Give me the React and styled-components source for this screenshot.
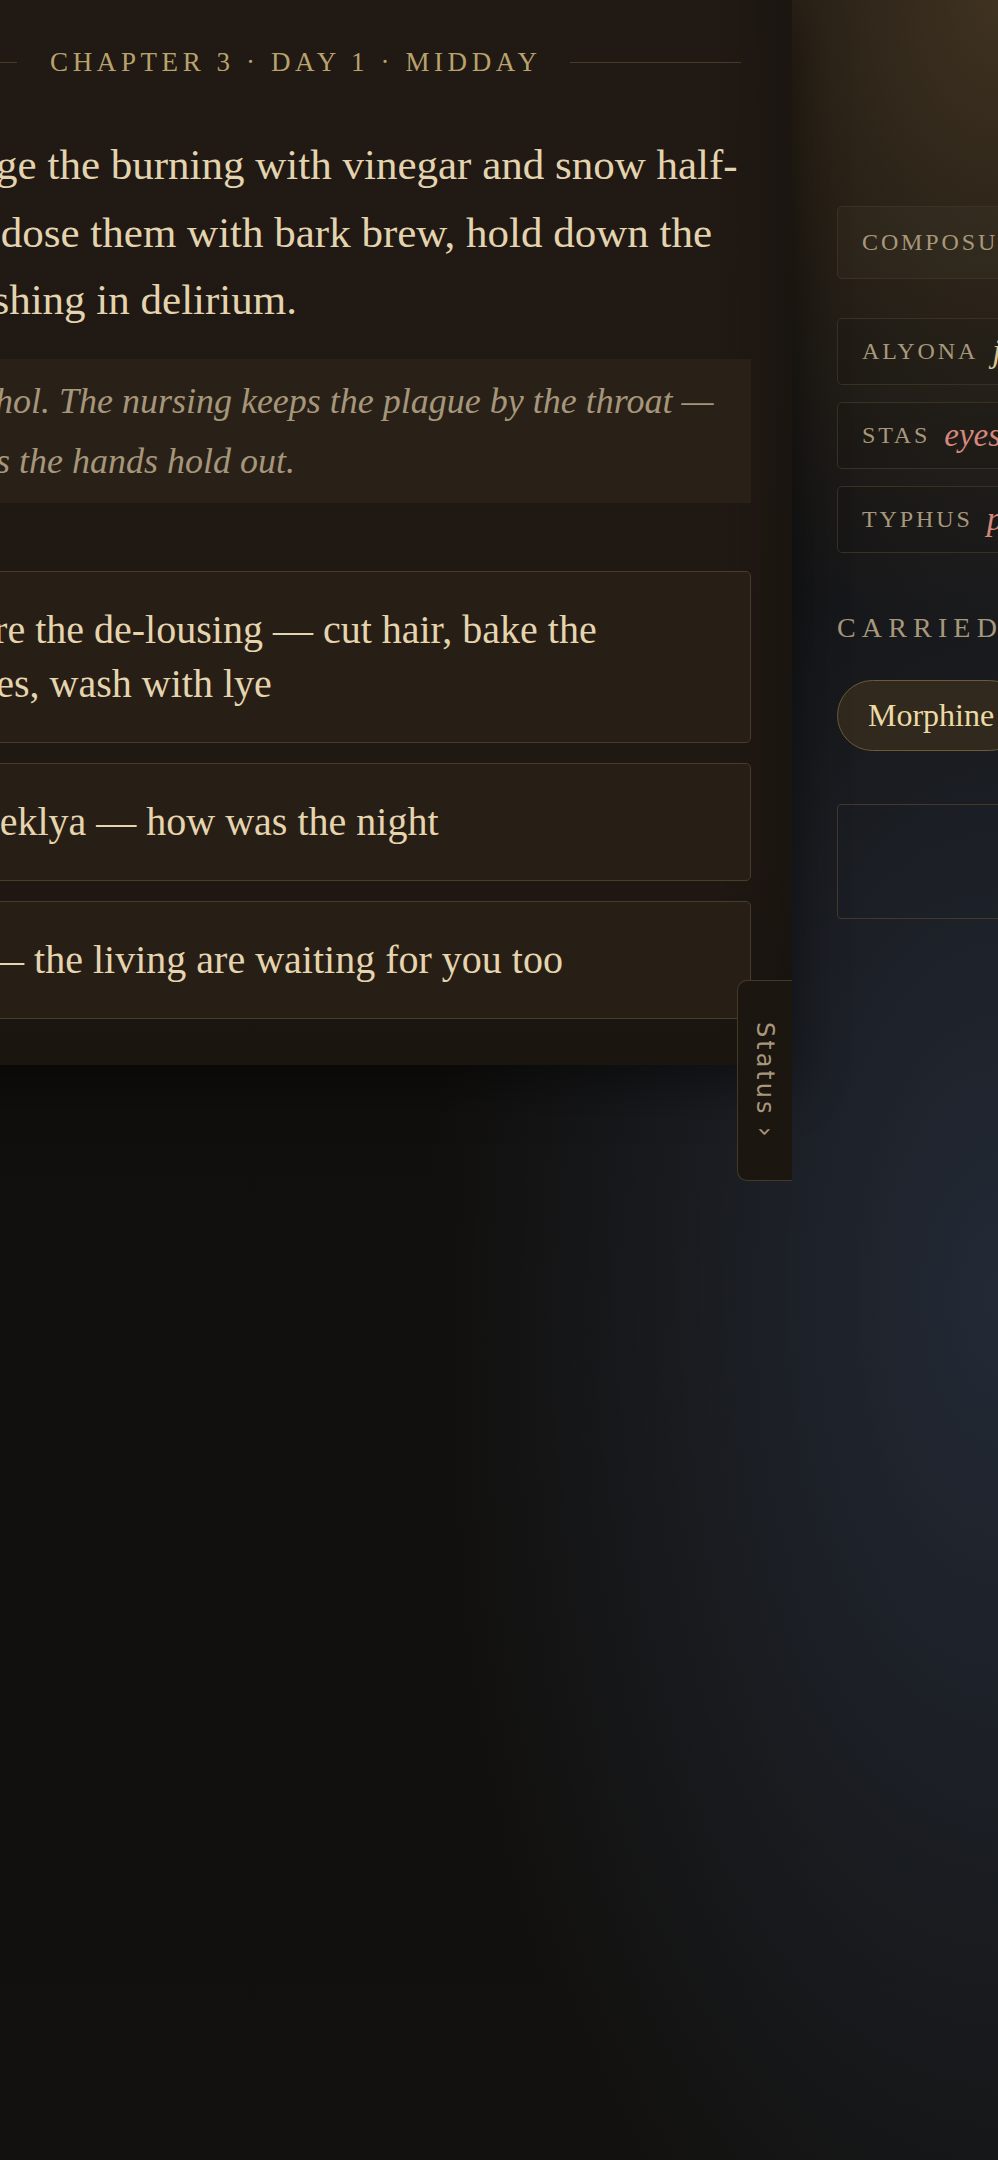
import styled, { createGlobalStyle } from "styled-components"

const GlobalStyle = createGlobalStyle`
    html, body {
        margin: 0;
        padding: 0;
    }
    body {
        min-height: 2160px;
        overflow: hidden;
        font-family: "Liberation Serif", "DejaVu Serif", serif;
        background:
            radial-gradient(ellipse 620px 900px at 100% 0%, rgba(68, 54, 35, 0.9) 0%, rgba(68, 54, 35, 0) 72%),
            radial-gradient(ellipse 760px 1500px at 100% 60%, rgba(36, 43, 56, 0.95) 0%, rgba(36, 43, 56, 0) 75%),
            linear-gradient(180deg, #0f0d0b 0%, #12110f 100%);
    }
`

const Stage = styled.div`
    display: flex;
    align-items: flex-start;
    margin-left: -205px;
    width: 1700px;
`

const Story = styled.main`
    position: relative;
    flex: 0 0 997px;
    box-sizing: border-box;
    padding: 44px 41px 46px;
    background:
        linear-gradient(90deg, rgba(0,0,0,0) 92%, rgba(0,0,0,0.14) 100%),
        linear-gradient(180deg, #201914 0%, #1f1813 80%, #1b1510 100%);
    box-shadow: 0 18px 50px rgba(0, 0, 0, 0.45);
`

const ChapterBar = styled.div`
    display: flex;
    align-items: center;
    gap: 33px;
    height: 36px;
    padding: 0 10px;
    &::before, &::after {
        content: "";
        flex: 1;
        height: 1px;
        background: #46382a;
    }
`

const ChapterTitle = styled.span`
    font-size: 27px;
    line-height: 36px;
    letter-spacing: 0.17em;
    margin-right: -0.17em;
    color: #b9a26c;
    white-space: nowrap;
`

const Prose = styled.p`
    margin: 51px 0 0;
    font-size: 43px;
    line-height: 67.5px;
    color: #e3d3ae;
    white-space: nowrap;
`

const Aside = styled.blockquote`
    margin: 25px 0 0;
    padding: 12px 28px;
    background: #292118;
    font-style: italic;
    font-size: 36px;
    line-height: 60px;
    color: #a6967a;
    white-space: nowrap;
`

const Choices = styled.div`
    display: flex;
    flex-direction: column;
    gap: 20px;
    margin-top: 68px;
`

const Choice = styled.button`
    display: block;
    width: 100%;
    box-sizing: border-box;
    padding: 31px 20px 31px 66px;
    border: 1px solid #4a3c2a;
    border-radius: 5px;
    background: #271f16;
    font-family: inherit;
    font-size: 40px;
    line-height: 54px;
    color: #e5d4ae;
    text-align: left;
    white-space: nowrap;
    cursor: pointer;
`

const StatusTab = styled.button`
    position: absolute;
    top: 980px;
    right: 0;
    width: 55px;
    height: 201px;
    box-sizing: border-box;
    padding: 0;
    display: flex;
    align-items: center;
    justify-content: center;
    border: 1.5px solid #46392a;
    border-right: 0;
    border-radius: 10px 0 0 10px;
    background: #1c1611;
    cursor: pointer;
`

const StatusText = styled.span`
    writing-mode: vertical-rl;
    font-family: "DejaVu Sans", "Liberation Sans", sans-serif;
    font-size: 24px;
    letter-spacing: 3px;
    color: #a8977a;
`

const Sidebar = styled.aside`
    flex: 0 0 520px;
    box-sizing: border-box;
    padding: 206px 40px 0 45px;
    display: flex;
    flex-direction: column;
`

const Meter = styled.div`
    height: 73px;
    box-sizing: border-box;
    display: flex;
    align-items: center;
    padding: 0 24px;
    border: 1px solid #3c3124;
    border-radius: 5px;
    background: rgba(255, 235, 200, 0.025);
`

const Caps = styled.span`
    font-size: 24px;
    letter-spacing: 0.12em;
    color: #a8987b;
    white-space: nowrap;
`

const People = styled.div`
    display: flex;
    flex-direction: column;
    gap: 17px;
    margin-top: 39px;
`

const Person = styled.div`
    height: 67px;
    box-sizing: border-box;
    display: flex;
    align-items: center;
    gap: 14px;
    padding: 0 24px;
    border: 1px solid #3a3024;
    border-radius: 5px;
    background: rgba(0, 0, 0, 0.06);
`

const Condition = styled.span`
    font-style: italic;
    font-size: 33px;
    color: ${p => p.$tone === "bad" ? "#d6877c" : "#d9c58e"};
    white-space: nowrap;
`

const SectionLabel = styled.div`
    margin-top: 60px;
    font-size: 28px;
    line-height: 30px;
    letter-spacing: 0.22em;
    color: #a8987b;
`

const Pill = styled.div`
    align-self: flex-start;
    margin-top: 37px;
    height: 71px;
    box-sizing: border-box;
    display: inline-flex;
    align-items: center;
    padding: 0 30px;
    border: 1.5px solid #6b5a33;
    border-radius: 36px;
    background: #32291e;
    font-size: 32px;
    color: #ebdaa5;
    white-space: nowrap;
`

const EmptySlot = styled.div`
    margin-top: 53px;
    height: 115px;
    box-sizing: border-box;
    border: 1.5px solid #45382a;
    border-radius: 4px;
`

export default function App(){
    const people = [
        { name: "ALYONA", state: "just holding", tone: "ok" },
        { name: "STAS", state: "eyes sunken", tone: "bad" },
        { name: "TYPHUS", state: "peaking", tone: "bad" },
    ]

    return <>
        <GlobalStyle />
        <Stage>
            <Story>
                <ChapterBar>
                    <ChapterTitle>CHAPTER 3 · DAY 1 · MIDDAY</ChapterTitle>
                </ChapterBar>
                <Prose>
                    We assuage the burning with vinegar and snow half-<br />
                    melted; I dose them with bark brew, hold down the<br />
                    ones thrashing in delirium.
                </Prose>
                <Aside>
                    Lye, alcohol. The nursing keeps the plague by the throat —<br />
                    as long as the hands hold out.
                </Aside>
                <Choices>
                    <Choice>
                        Prepare the de-lousing — cut hair, bake the<br />
                        britches, wash with lye
                    </Choice>
                    <Choice>Ask Feklya — how was the night</Choice>
                    <Choice>Rest — the living are waiting for you too</Choice>
                </Choices>
                <StatusTab>
                    <StatusText>Status ›</StatusText>
                </StatusTab>
            </Story>
            <Sidebar>
                <Meter>
                    <Caps>COMPOSURE</Caps>
                </Meter>
                <People>
                    {people.map(p => (
                        <Person key={p.name}>
                            <Caps>{p.name}</Caps>
                            <Condition $tone={p.tone}>{p.state}</Condition>
                        </Person>
                    ))}
                </People>
                <SectionLabel>CARRIED</SectionLabel>
                <Pill>Morphine</Pill>
                <EmptySlot />
            </Sidebar>
        </Stage>
    </>
}
